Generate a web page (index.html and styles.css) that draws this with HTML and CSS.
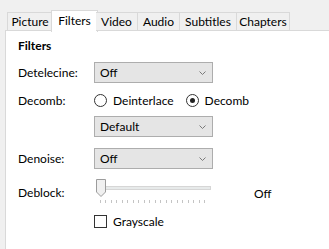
FILE: index.html
```html
<!DOCTYPE html>
<html>
<head>
    <link rel="stylesheet" href="styles.css">
</head>
<body>

    <div class="tabs">
        <div class="tab tab-picture">Picture</div>
        <div class="tab tab-filters active">Filters</div>
        <div class="tab tab-video">Video</div>
        <div class="tab tab-audio">Audio</div>
        <div class="tab tab-subtitles">Subtitles</div>
        <div class="tab tab-chapters">Chapters</div>
    </div>

    <div class="panel">
        <div class="heading">Filters</div>

        <div class="row row-detelecine">
            <span class="label">Detelecine:</span>
            <div class="combo">
                <span>Off</span>
                <svg class="chevron" width="7" height="4" viewBox="0 0 7 4"><polyline points="0.5,0.5 3.5,3.5 6.5,0.5" fill="none" stroke="#7a7a7a" stroke-width="1"/></svg>
            </div>
        </div>

        <div class="row row-decomb">
            <span class="label">Decomb:</span>
            <div class="radios">
                <label class="radio"><span class="circle"></span>Deinterlace</label>
                <label class="radio"><span class="circle checked"></span>Decomb</label>
            </div>
        </div>

        <div class="row row-preset">
            <span class="label"></span>
            <div class="combo">
                <span>Default</span>
                <svg class="chevron" width="7" height="4" viewBox="0 0 7 4"><polyline points="0.5,0.5 3.5,3.5 6.5,0.5" fill="none" stroke="#7a7a7a" stroke-width="1"/></svg>
            </div>
        </div>

        <div class="row row-denoise">
            <span class="label">Denoise:</span>
            <div class="combo">
                <span>Off</span>
                <svg class="chevron" width="7" height="4" viewBox="0 0 7 4"><polyline points="0.5,0.5 3.5,3.5 6.5,0.5" fill="none" stroke="#7a7a7a" stroke-width="1"/></svg>
            </div>
        </div>

        <div class="row row-deblock">
            <span class="label">Deblock:</span>
            <div class="slider">
                <div class="track"></div>
                <svg class="thumb" width="11" height="19" viewBox="0 0 11 19"><path d="M0.5 0.5 H9.5 V13 L5 17.5 L0.5 13 Z" fill="#f0f0f0" stroke="#9c9c9c"/></svg>
                <div class="ticks"></div>
            </div>
            <span class="value">Off</span>
        </div>

        <div class="row row-grayscale">
            <span class="label"></span>
            <label class="check"><span class="box"></span>Grayscale</label>
        </div>
    </div>

</body>
</html>
```

FILE: styles.css
```css
html {
    height: 100%;
}

body {
    font-family: Lato, "Noto Sans", sans-serif;
    font-size: 12px;
    color: #000;
    background-color: #f0f0f0;
    margin: 0;
    padding: 0;
    height: 100%;
    display: flex;
    flex-direction: column;
    overflow: hidden;
}

.tabs {
    display: flex;
    padding: 12px 0 0 7px;
    height: 18px;
    flex-shrink: 0;
    position: relative;
    z-index: 1;
}

.tab {
    box-sizing: border-box;
    height: 19px;
    line-height: 17px;
    border: 1px solid #d9d9d9;
    border-left: none;
    text-align: center;
    background-color: #f0f0f0;
}

.tab-picture { width: 46px; border-left: 1px solid #d9d9d9; }
.tab-video { width: 42px; }
.tab-audio { width: 42px; }
.tab-subtitles { width: 57px; }
.tab-chapters { width: 53px; }

.tab.active {
    background-color: #fff;
    border-left: 1px solid #d9d9d9;
    border-bottom: none;
    width: 47px;
    height: 22px;
    margin: -2px -2px 0 -2px;
    line-height: 19px;
}

.panel {
    flex: 1;
    margin-left: 5px;
    background-color: #fff;
    border-top: 1px solid #d9d9d9;
    border-left: 1px solid #d9d9d9;
    padding-left: 12px;
}

.heading {
    font-weight: bold;
    line-height: 16px;
    padding-top: 7px;
}

.row {
    display: flex;
    align-items: center;
}

.label {
    width: 76px;
    flex-shrink: 0;
}

.row-detelecine { margin-top: 8px; }
.row-decomb { margin-top: 9px; height: 16px; }
.row-preset { margin-top: 8px; }
.row-denoise { margin-top: 11px; }
.row-deblock { margin-top: 10px; height: 26px; }
.row-grayscale { margin-top: 9px; }

.combo {
    box-sizing: border-box;
    width: 119px;
    height: 21px;
    border: 1px solid #adadad;
    background-color: #e5e5e5;
    display: flex;
    align-items: center;
    justify-content: space-between;
    padding: 0 6px 0 5px;
}

.radios {
    display: flex;
    gap: 12px;
}

.radio {
    display: flex;
    align-items: center;
    gap: 6px;
}

.circle {
    box-sizing: border-box;
    width: 13px;
    height: 13px;
    border: 1px solid #333;
    border-radius: 50%;
    background-color: #fff;
    display: flex;
    align-items: center;
    justify-content: center;
}

.circle.checked::after {
    content: "";
    width: 5px;
    height: 5px;
    border-radius: 50%;
    background-color: #222;
}

.slider {
    position: relative;
    width: 120px;
    height: 26px;
}

.track {
    position: absolute;
    left: 2px;
    top: 7px;
    width: 113px;
    height: 2px;
    background-color: #e7eaea;
    border: 1px solid #d6d6d6;
}

.thumb {
    position: absolute;
    left: 2px;
    top: 0;
}

.ticks {
    position: absolute;
    left: 6px;
    top: 21px;
    width: 110px;
    height: 3px;
    background: repeating-linear-gradient(to right, #c4c4c4 0, #c4c4c4 1px, transparent 1px, transparent 5.5px);
}

.value {
    margin-left: 40px;
    margin-top: 2px;
}

.check {
    display: flex;
    align-items: center;
    gap: 6px;
}

.box {
    box-sizing: border-box;
    width: 13px;
    height: 13px;
    border: 1px solid #333;
    background-color: #fff;
}
```
